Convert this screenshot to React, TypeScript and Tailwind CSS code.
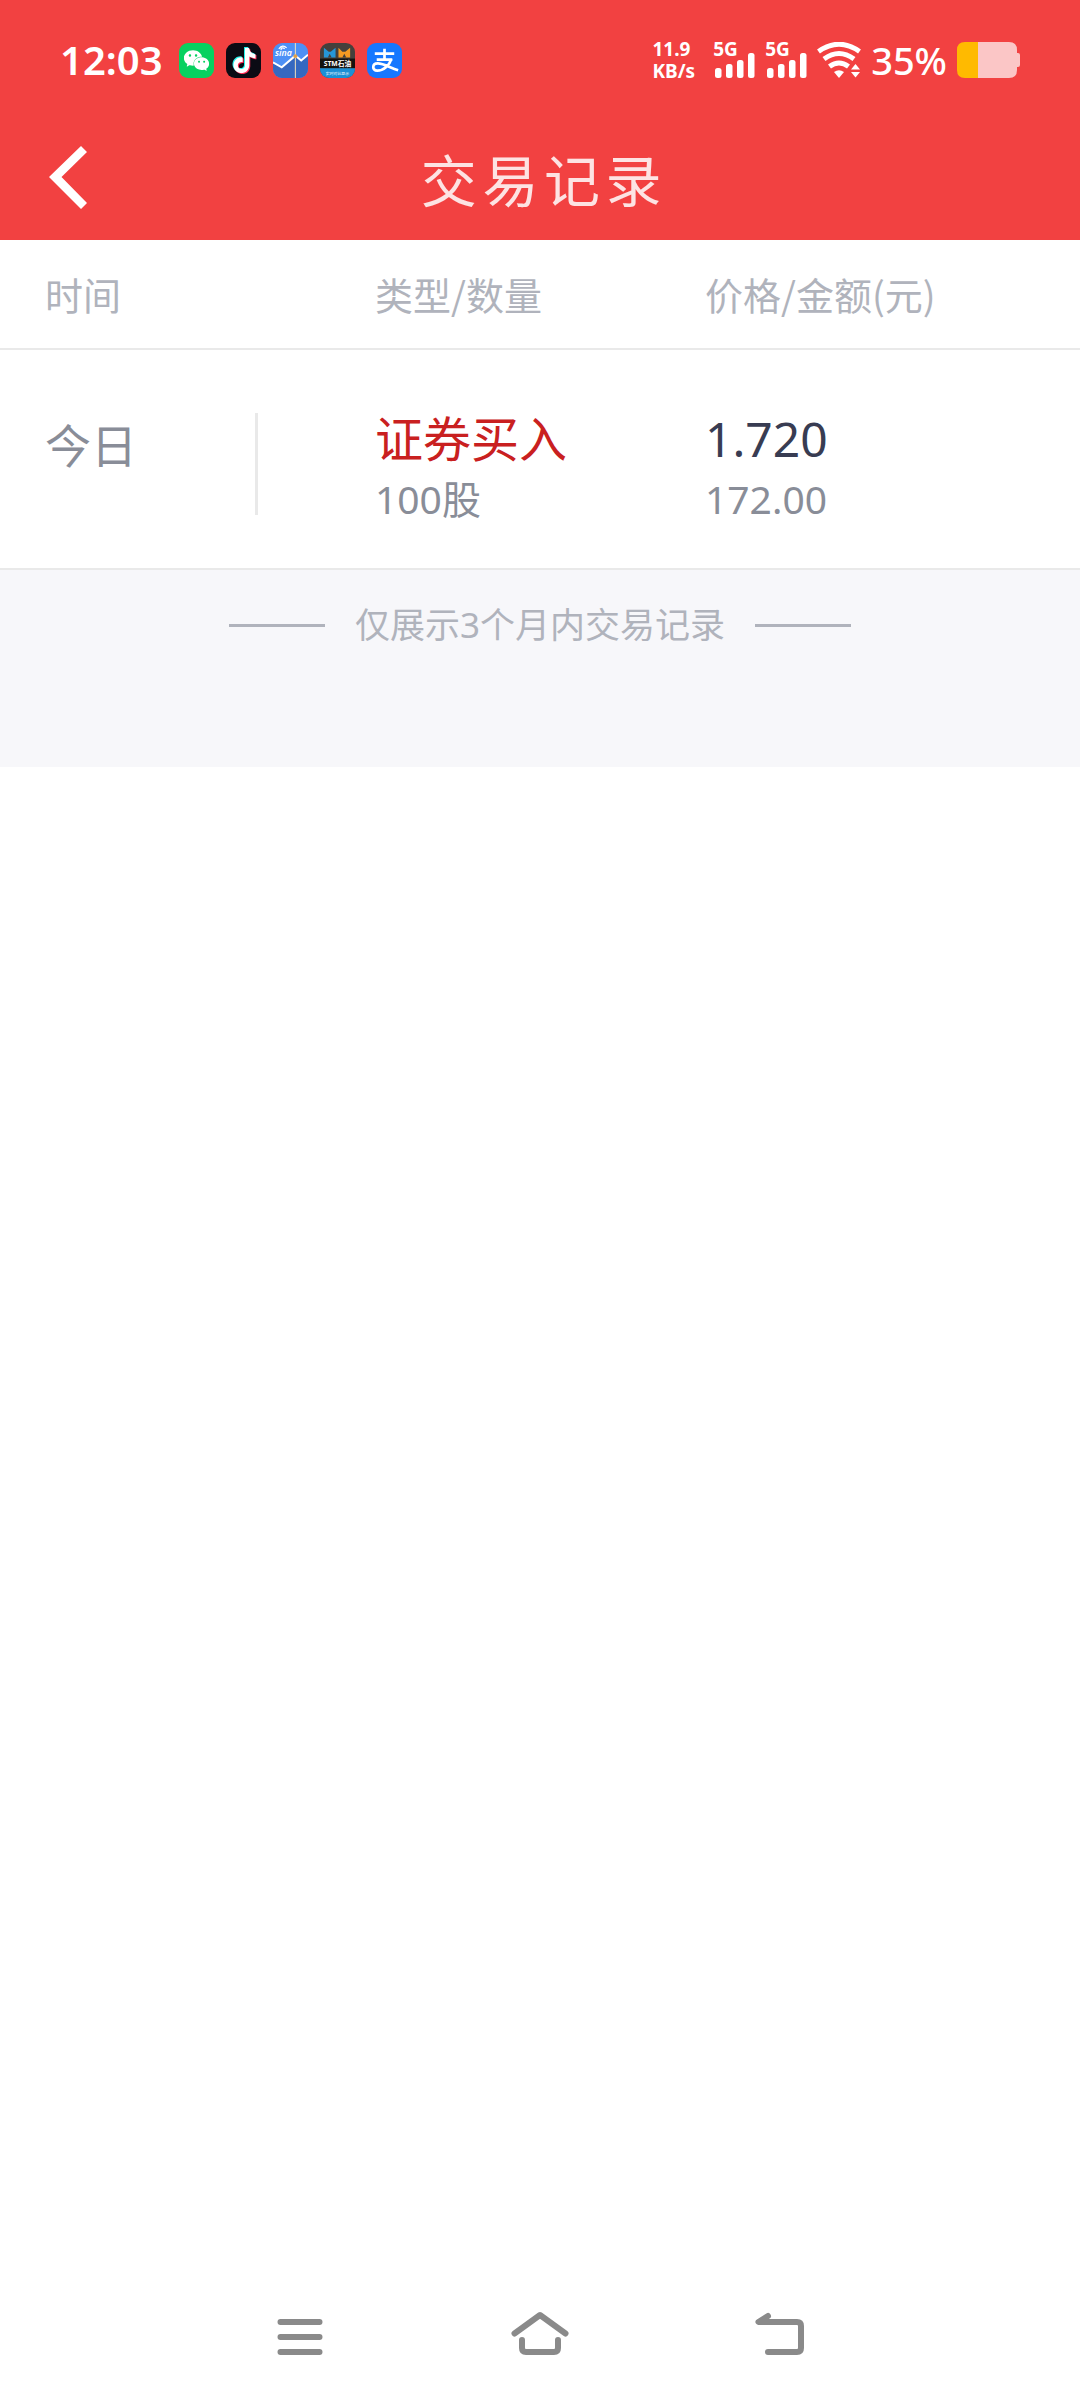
import type { ReactNode } from 'react';
import { SiTiktok, SiWechat } from 'react-icons/si';

interface TradeRecord {
  id: number;
  date: string;
  type: string;
  quantity: string;
  price: string;
  amount: string;
}

const COLUMNS = ['时间', '类型/数量', '价格/金额(元)'];

const RECORDS: TradeRecord[] = [
  { id: 1, date: '今日', type: '证券买入', quantity: '100股', price: '1.720', amount: '172.00' },
];

function AppIcon({ className, children }: { className: string; children: ReactNode }) {
  return (
    <svg viewBox="0 0 36 36" className={`size-[35px] rounded-[9px] ${className}`} aria-hidden="true">
      {children}
    </svg>
  );
}

// 通知栏应用图标
function AppIcons() {
  return (
    <div className="flex items-center gap-3">
      <AppIcon className="bg-[#07d160]">
        <SiWechat x={5} y={5} size={26} color="#fff" />
      </AppIcon>
      <AppIcon className="bg-[#0b0b14]">
        <SiTiktok x={5} y={4} size={26} color="#25f4ee" />
        <SiTiktok x={7} y={6} size={26} color="#fe2c55" />
        <SiTiktok x={6} y={5} size={26} color="#fff" />
      </AppIcon>
      <AppIcon className="bg-[#4d90f5]">
        <path d="M0 20 L9 25 L23 13 L29 18 L36 12 V36 H0 Z" fill="#3568c0" />
        <path d="M0 20 L9 25 L23 13 L29 18 L36 12" fill="none" stroke="#fff" strokeWidth="2" />
        <path d="M23 0 V36" stroke="#f3e3bd" strokeWidth="1" />
        <circle cx="23" cy="13.500" r="2" fill="#e0a04a" />
        <path d="M6 6 Q10 1 14 5 M8 6 Q10 4 12 6" fill="none" stroke="#fff" strokeWidth="1.300" />
        <text x="2" y="13" fontSize="9" fontStyle="italic" fontWeight="600" fill="#fff">sina</text>
      </AppIcon>
      <AppIcon className="bg-[#45403c]">
        <path d="M4 5 L9 9 L11 9 L16 5 V15 H4 Z" fill="#2596d8" />
        <path d="M19 5 L23 9 L26 9 L31 5 V15 H19 Z" fill="#f59a23" />
        <path d="M8 15 L10 11 L12 15 Z M23 15 L25 11 L27 15 Z" fill="#45403c" />
        <rect y="16" width="36" height="10" fill="#15120f" />
        <rect y="26" width="36" height="10" fill="#1b8fd6" />
        <text x="18" y="24" fontSize="7" fontWeight="700" textAnchor="middle" fill="#fff">STM石油</text>
        <text x="18" y="33" fontSize="4" textAnchor="middle" fill="#fff">实时对比显示</text>
      </AppIcon>
      <AppIcon className="bg-[#1677ff]">
        <g fill="none" stroke="#fff">
          <path d="M8 11 H28 M18 6 V17 M10 17 H26" strokeWidth="2.800" />
          <path d="M25 16.500 C23 23 17 28.500 10.500 28.500 C5 28.500 5 21 11 21 C17 21 23 25 32 28" strokeWidth="2.800" />
        </g>
      </AppIcon>
    </div>
  );
}

function Signal() {
  return (
    <div className="relative h-9 w-[42px]">
      <span className="absolute left-0 top-0 text-[19px] leading-[14px] font-bold">5G</span>
      <svg viewBox="0 0 42 36" className="h-9 w-[42px]" fill="currentColor" aria-hidden="true">
        <rect x="2" y="26" width="6.500" height="10" rx="2.500" />
        <rect x="13" y="22" width="6.500" height="14" rx="2.500" />
        <rect x="24" y="18" width="6.500" height="18" rx="2.500" />
        <rect x="35" y="11" width="6.500" height="25" rx="2.500" />
      </svg>
    </div>
  );
}

function Wifi() {
  return (
    <svg viewBox="0 0 44 36" className="h-9 w-11" fill="none" stroke="currentColor" strokeWidth="5" aria-hidden="true">
      <path d="M1.500 9.500 Q22 -5 42.500 9.500" />
      <path d="M7 17 Q22 6 37 17" />
      <path d="M12.500 24.500 Q22 17.500 31.500 24.500" />
      <path d="M17 30 Q22 26.500 27 30 L22 36 Z" fill="currentColor" stroke="none" />
      <path d="M34 27.500 L38.500 22 L43 27.500 Z M34 30 L38.500 35.500 L43 30 Z" fill="currentColor" stroke="none" />
    </svg>
  );
}

function StatusBar() {
  return (
    <div className="flex h-[120px] items-center justify-between px-[60px] text-white">
      <div className="flex items-center gap-4">
        <span className="text-[40px] leading-[48px] font-semibold">12:03</span>
        <AppIcons />
      </div>
      <div className="flex items-center gap-[10px]">
        <div className="mr-2 text-[19px] leading-[22px] font-bold">
          <div>11.9</div>
          <div>KB/s</div>
        </div>
        <Signal />
        <Signal />
        <Wifi />
        <span className="text-[38px] leading-[48px] font-medium">35%</span>
        <svg viewBox="0 0 63 36" className="h-9 w-[63px]" aria-hidden="true">
          <path d="M21 0 H52 Q60 0 60 8 V11 H61 Q63 11 63 13 V23 Q63 25 61 25 H60 V28 Q60 36 52 36 H21 Z" fill="#fbc6c6" />
          <path d="M21 0 H8 Q0 0 0 8 V28 Q0 36 8 36 H21 Z" fill="#ffba00" />
        </svg>
      </div>
    </div>
  );
}

function TitleBar() {
  return (
    <div className="grid h-[120px] grid-cols-[1fr_auto_1fr] items-center px-12">
      <button type="button" aria-label="返回" className="w-10 pb-1 text-white">
        <svg viewBox="0 0 40 64" className="h-16 w-10" fill="currentColor">
          <path d="M33 0 L39 6 L13.500 31 L39 57 L33 63 L1 31 Z" />
        </svg>
      </button>
      <h1 className="pl-2 text-[56px] leading-[72px] tracking-widest text-[#fde3e3]">交易记录</h1>
    </div>
  );
}

function TradeTable() {
  return (
    <table className="block w-full">
      <thead className="block font-['Noto_Sans_CJK_SC',sans-serif]">
        <tr className="grid grid-cols-3 border-b-2 border-[#e9e9e9] px-[45px] py-[29px]">
          {COLUMNS.map(name => (
            <th key={name} scope="col" className="text-left text-[38px] leading-[50px] font-normal text-[#b0b3bc]">{name}</th>
          ))}
        </tr>
      </thead>
      <tbody className="block">
        {RECORDS.map(record => (
          <tr key={record.id} className="grid grid-cols-3 border-b-2 border-[#e9e9e9] px-[45px] pt-[59px] pb-[39px] text-[#898d98]">
            <td className="flex items-start">
              <span className="w-[210px] text-[46px] leading-[72px]">{record.date}</span>
              <span className="mt-1 h-[102px] w-[3px] bg-[#e9e9e9]" />
            </td>
            <td>
              <div className="text-[48px] leading-[60px] text-[#c92020]">{record.type}</div>
              <div className="text-[39px] leading-[60px]">{record.quantity}</div>
            </td>
            <td>
              <div className="text-[48px] leading-[60px] text-[#383c52]">{record.price}</div>
              <div className="text-[39px] leading-[60px]">{record.amount}</div>
            </td>
          </tr>
        ))}
      </tbody>
    </table>
  );
}

// 系统导航栏
function SystemNav() {
  return (
    <nav className="mt-auto grid grid-cols-3 px-[180px] pb-8 text-[#8a8a8a]">
      <button type="button" aria-label="最近任务" className="flex justify-center">
        <svg viewBox="0 0 60 60" className="size-[60px]" fill="none" stroke="currentColor" strokeWidth="6" strokeLinecap="round">
          <path d="M10.500 14 H49.500 M10.500 29 H49.500 M10.500 44 H49.500" />
        </svg>
      </button>
      <button type="button" aria-label="主页" className="flex justify-center">
        <svg viewBox="0 0 60 60" className="size-[60px]" fill="none" stroke="currentColor" strokeWidth="6" strokeLinecap="round" strokeLinejoin="round">
          <path d="M4.500 25.500 L30 7 L55.500 25.500" />
          <path d="M12 32 V40 Q12 44 16 44 H44 Q48 44 48 40 V32" />
        </svg>
      </button>
      <button type="button" aria-label="返回上一级" className="flex justify-center">
        <svg viewBox="0 0 60 60" className="size-[60px]" fill="none" stroke="currentColor" strokeWidth="6" strokeLinecap="round" strokeLinejoin="round">
          <path d="M18 8 L8.500 14 H47 Q51 14 51 18 V40 Q51 44 47 44 H18" />
        </svg>
      </button>
    </nav>
  );
}

export default function App() {
  return (
    <div lang="zh-CN" className="flex min-h-screen flex-col bg-white font-['Noto_Sans','Noto_Sans_CJK_SC',sans-serif]">
      <header className="bg-[#f24141]">
        <StatusBar />
        <TitleBar />
      </header>
      <main>
        <TradeTable />
        <div className="flex items-center justify-center gap-[30px] bg-[#f7f7fa] pt-[30px] pb-[117px] text-[#b0b3bc]">
          <span className="h-[3px] w-24 bg-[#b0b3bc]" />
          <p className="text-[35px] leading-[50px]">仅展示3个月内交易记录</p>
          <span className="h-[3px] w-24 bg-[#b0b3bc]" />
        </div>
      </main>
      <SystemNav />
    </div>
  );
}
